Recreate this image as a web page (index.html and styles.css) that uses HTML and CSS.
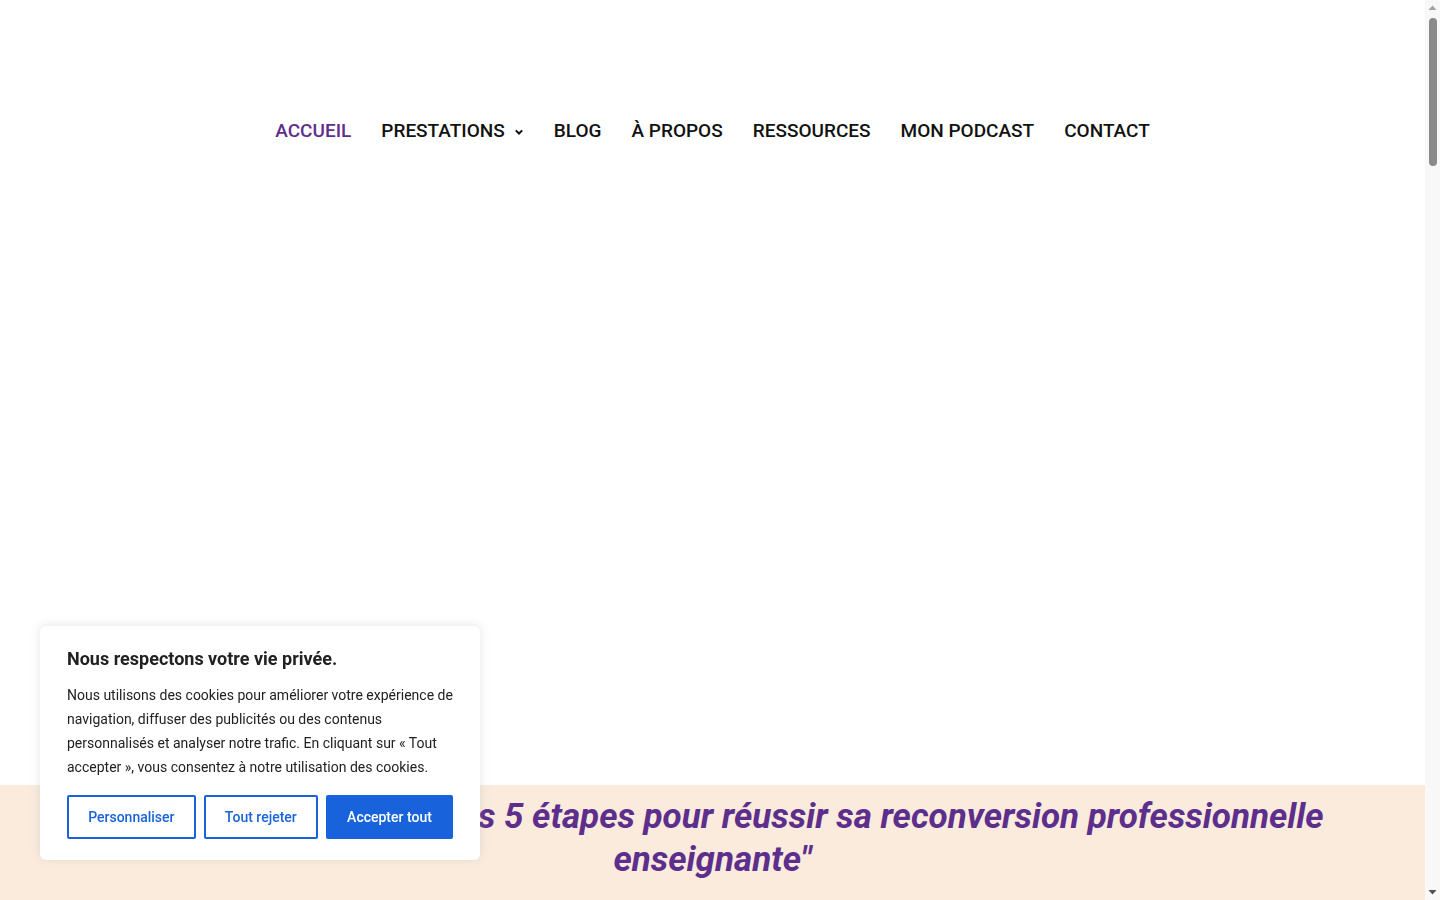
FILE: index.html
```html
<!DOCTYPE html>
<html lang="fr">
<head>
    <meta charset="UTF-8">
    <meta name="viewport" content="width=device-width, initial-scale=1.0">
    <title>Accueil</title>
    <link rel="stylesheet" href="styles.css">
</head>
<body>
    <header class="site-header">
        <nav class="main-nav">
            <a href="#" class="nav-link active">ACCUEIL</a>
            <a href="#" class="nav-link">PRESTATIONS
                <svg class="caret" width="10" height="10" viewBox="0 0 10 10"><path d="M1.8 3.4 L5 6.5 L8.2 3.4" fill="none" stroke="currentColor" stroke-width="2"/></svg>
            </a>
            <a href="#" class="nav-link">BLOG</a>
            <a href="#" class="nav-link">À PROPOS</a>
            <a href="#" class="nav-link">RESSOURCES</a>
            <a href="#" class="nav-link">MON PODCAST</a>
            <a href="#" class="nav-link">CONTACT</a>
        </nav>
    </header>

    <!-- visuel d'accueil -->
    <section class="hero"></section>

    <!-- bandeau guide gratuit -->
    <section class="guide-banner">
        <h2 class="guide-title">Mon e-guide gratuit : "Les 5 étapes pour réussir sa reconversion professionnelle enseignante"</h2>
    </section>

    <section class="page-rest"></section>

    <!-- barre de défilement -->
    <div class="scroll-track">
        <svg class="scroll-arrow" width="15" height="15" viewBox="0 0 15 15"><path d="M3.5 10 L7.5 5.5 L11.5 10 Z" fill="#a3a3a3"/></svg>
        <div class="scroll-thumb"></div>
        <svg class="scroll-arrow bottom" width="15" height="15" viewBox="0 0 15 15"><path d="M3.5 5 L7.5 9.5 L11.5 5 Z" fill="#505050"/></svg>
    </div>

    <!-- bannière cookies -->
    <div class="cookie-box">
        <p class="cookie-title">Nous respectons votre vie privée.</p>
        <p class="cookie-text">Nous utilisons des cookies pour améliorer votre expérience de navigation, diffuser des publicités ou des contenus personnalisés et analyser notre trafic. En cliquant sur « Tout accepter », vous consentez à notre utilisation des cookies.</p>
        <div class="cookie-buttons">
            <button class="cookie-btn">Personnaliser</button>
            <button class="cookie-btn">Tout rejeter</button>
            <button class="cookie-btn accept">Accepter tout</button>
        </div>
    </div>
</body>
</html>
```

FILE: styles.css
```css
body {
    margin: 0 15px 0 0;
    font-family: Roboto, "Liberation Sans", sans-serif;
    background-color: #fff;
    color: #212121;
}
.site-header {
    padding-top: 111px;
    height: 59px;
}
.main-nav {
    display: flex;
    justify-content: center;
    align-items: center;
}
.nav-link {
    display: flex;
    align-items: center;
    gap: 9px;
    padding: 0 15px;
    font-size: 19px;
    font-weight: 500;
    line-height: 40px;
    color: #111;
    text-decoration: none;
}
.nav-link.active {
    color: #5d2e8c;
}
.caret {
    margin-top: 1px;
}
.hero {
    height: 615px;
}
.guide-banner {
    background-color: #faebdd;
    padding: 10px 50px 40px;
}
.guide-title {
    margin: 0;
    text-align: center;
    font-size: 35px;
    font-weight: 700;
    font-style: italic;
    line-height: 43px;
    color: #5d2e8c;
}
.page-rest {
    height: 4300px;
}
.scroll-track {
    position: fixed;
    top: 0;
    right: 0;
    width: 15px;
    height: 100vh;
    display: flex;
    flex-direction: column;
    align-items: center;
    background-color: #f8f8f8;
    z-index: 200;
}
.scroll-arrow {
    flex: none;
}
.scroll-arrow.bottom {
    margin-top: auto;
}
.scroll-thumb {
    width: 8px;
    height: 148px;
    margin-top: 3px;
    border-radius: 4px;
    background-color: #8a8a8a;
}
.cookie-box {
    position: fixed;
    left: 40px;
    bottom: 40px;
    width: 440px;
    box-sizing: border-box;
    padding: 23px 27px 21px;
    background-color: #fff;
    border-radius: 6px;
    box-shadow: 0 -1px 10px rgba(172, 171, 171, 0.3);
    z-index: 100;
}
.cookie-title {
    margin: 0 0 14px;
    font-size: 18px;
    font-weight: 700;
    line-height: 20px;
    color: #212121;
}
.cookie-text {
    margin: 0;
    font-size: 14px;
    line-height: 24px;
    color: #212121;
}
.cookie-buttons {
    display: flex;
    gap: 8px;
    margin-top: 16px;
}
.cookie-btn {
    flex: 1 1 auto;
    height: 44px;
    padding: 0 16px;
    font-family: inherit;
    font-size: 14px;
    font-weight: 500;
    color: #1863dc;
    background-color: #fff;
    border: 2px solid #1863dc;
    border-radius: 2px;
    cursor: pointer;
}
.cookie-btn.accept {
    color: #fff;
    background-color: #1863dc;
}
```
